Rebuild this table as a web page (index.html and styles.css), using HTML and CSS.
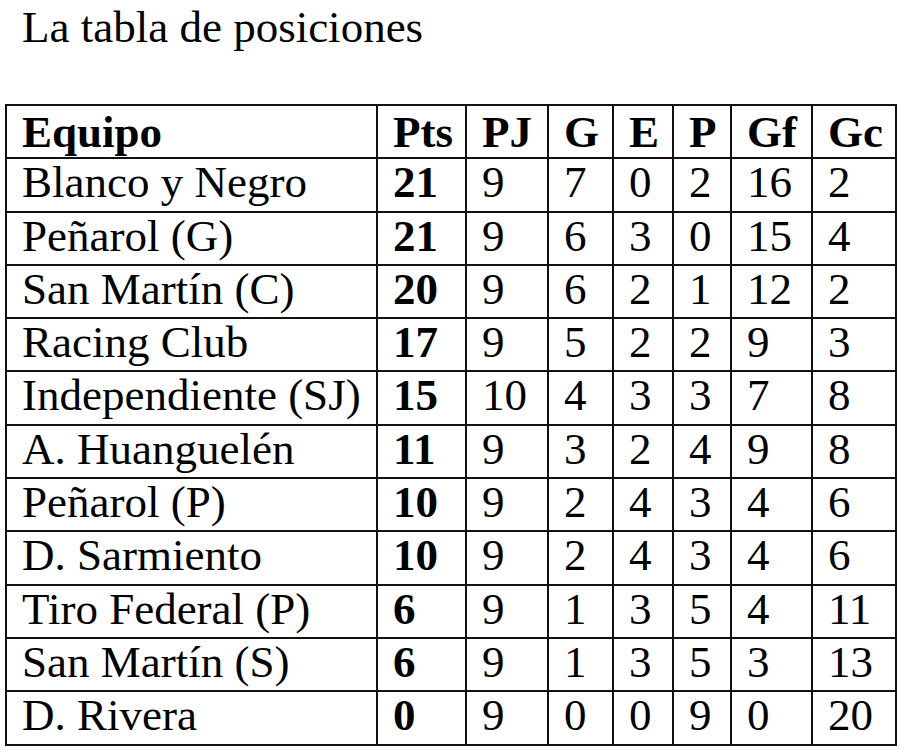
FILE: index.html
```html
<!DOCTYPE html>
<html lang="es">
<head>
<meta charset="utf-8">
<title>La tabla de posiciones</title>
<link rel="stylesheet" href="styles.css">
</head>
<body>
<h1 class="title">La tabla de posiciones</h1>
<table class="standings">
  <colgroup>
    <col class="c-team"><col class="c-pts"><col class="c-pj"><col class="c-g"><col class="c-e"><col class="c-p"><col class="c-gf"><col class="c-gc">
  </colgroup>
  <thead>
    <tr><th>Equipo</th><th>Pts</th><th>PJ</th><th>G</th><th>E</th><th>P</th><th>Gf</th><th>Gc</th></tr>
  </thead>
  <tbody>
    <tr><td>Blanco y Negro</td><td class="pts">21</td><td>9</td><td>7</td><td>0</td><td>2</td><td>16</td><td>2</td></tr>
    <tr><td>Peñarol (G)</td><td class="pts">21</td><td>9</td><td>6</td><td>3</td><td>0</td><td>15</td><td>4</td></tr>
    <tr><td>San Martín (C)</td><td class="pts">20</td><td>9</td><td>6</td><td>2</td><td>1</td><td>12</td><td>2</td></tr>
    <tr><td>Racing Club</td><td class="pts">17</td><td>9</td><td>5</td><td>2</td><td>2</td><td>9</td><td>3</td></tr>
    <tr><td>Independiente (SJ)</td><td class="pts">15</td><td>10</td><td>4</td><td>3</td><td>3</td><td>7</td><td>8</td></tr>
    <tr><td>A. Huanguelén</td><td class="pts">11</td><td>9</td><td>3</td><td>2</td><td>4</td><td>9</td><td>8</td></tr>
    <tr><td>Peñarol (P)</td><td class="pts">10</td><td>9</td><td>2</td><td>4</td><td>3</td><td>4</td><td>6</td></tr>
    <tr><td>D. Sarmiento</td><td class="pts">10</td><td>9</td><td>2</td><td>4</td><td>3</td><td>4</td><td>6</td></tr>
    <tr><td>Tiro Federal (P)</td><td class="pts">6</td><td>9</td><td>1</td><td>3</td><td>5</td><td>4</td><td>11</td></tr>
    <tr><td>San Martín (S)</td><td class="pts">6</td><td>9</td><td>1</td><td>3</td><td>5</td><td>3</td><td>13</td></tr>
    <tr><td>D. Rivera</td><td class="pts">0</td><td>9</td><td>0</td><td>0</td><td>9</td><td>0</td><td>20</td></tr>
  </tbody>
</table>
</body>
</html>
```

FILE: styles.css
```css
html, body {
  margin: 0;
  padding: 0;
  background: #fff;
  color: #000;
  font-family: "Liberation Serif", "Times New Roman", serif;
}

.title {
  margin: 0;
  padding: 5px 0 0 22px;
  font-size: 45px;
  font-weight: normal;
  line-height: 44px;
}

.standings {
  margin: 55px 0 0 5px;
  width: 890px;
  table-layout: fixed;
  border-collapse: collapse;
  font-size: 45px;
}

.c-team { width: 371px; }
.c-pts { width: 89px; }
.c-pj { width: 82px; }
.c-g { width: 65px; }
.c-e { width: 60px; }
.c-p { width: 58px; }
.c-gf { width: 81px; }
.c-gc { width: 84px; }

.standings th,
.standings td {
  border: 2px solid #111;
  height: 53.3px;
  box-sizing: border-box;
  padding: 0 0 0 15px;
  line-height: 47px;
  vertical-align: top;
  text-align: left;
  white-space: nowrap;
}

.standings th {
  font-weight: bold;
  padding-top: 3px;
}

.standings .pts {
  font-weight: bold;
}
```
